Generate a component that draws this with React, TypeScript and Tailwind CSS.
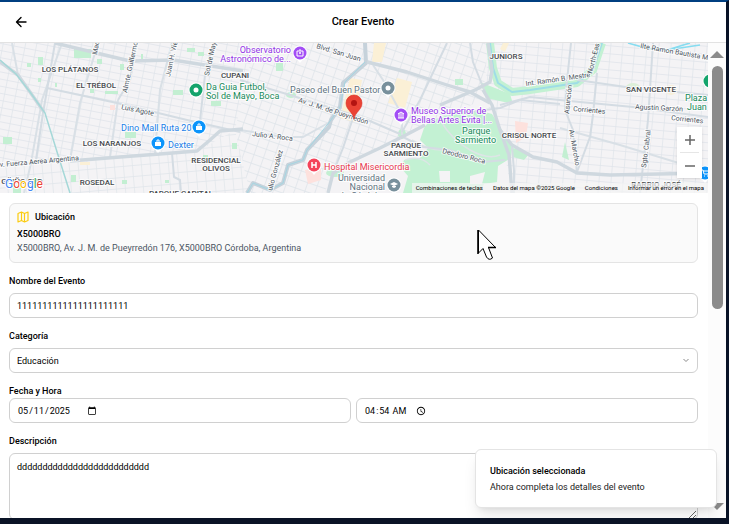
import { useState } from "react";
import type { ReactNode } from "react";

type Point = [number, number];

const line = (points: Point[]) => points.map((p) => p.join(",")).join(" ");

const minorRoads: Point[][] = [
  [[62, 43], [42, 100], [31, 163], [24, 193]],
  [[98, 43], [80, 103], [70, 160]],
  [[118, 100], [110, 157]],
  [[172, 43], [160, 90], [155, 153]],
  [[240, 130], [283, 137], [303, 137], [330, 122]],
  [[560, 128], [620, 145], [708, 172]],
  [[18, 75], [12, 43]],
  [[373, 65], [383, 80], [402, 115], [402, 135]],
];

const midRoads: Point[][] = [
  [[136, 43], [130, 80], [118, 100]],
  [[213, 43], [205, 75], [200, 121]],
  [[47, 88], [117, 103], [187, 120], [240, 132]],
  [[172, 153], [174, 177], [180, 180], [181, 193]],
  [[55, 43], [47, 90], [43, 113], [36, 160]],
  [[240, 80], [290, 95], [363, 118], [400, 134]],
  [[353, 118], [343, 148], [333, 173]],
  [[447, 43], [420, 100], [402, 132]],
  [[403, 137], [423, 147], [450, 150], [483, 162], [505, 160]],
  [[470, 43], [473, 62], [485, 92]],
  [[565, 110], [573, 130], [577, 172]],
  [[597, 73], [593, 115], [590, 137], [577, 172]],
  [[653, 43], [648, 120], [642, 175], [640, 193]],
  [[577, 80], [633, 88], [708, 95]],
  [[500, 105], [530, 97], [580, 102], [633, 107], [708, 117]],
  [[470, 112], [500, 108], [520, 100], [560, 104]],
  [[571, 43], [566, 90], [565, 112]],
  [[512, 147], [514, 170], [514, 193]],
];

const mainRoads: Point[][] = [
  [[55, 43], [130, 61], [173, 60], [243, 71]],
  [[0, 62], [18, 75], [30, 92], [44, 112]],
  [[70, 161], [120, 157], [160, 154], [197, 151], [210, 140], [220, 131], [243, 129]],
  [[367, 62], [407, 72], [447, 85], [470, 92], [490, 103]],
  [[400, 138], [380, 148], [350, 162], [333, 173], [328, 193]],
  [[400, 138], [425, 125]],
  [[483, 90], [492, 105], [500, 130], [512, 145], [533, 157], [557, 162], [577, 173], [610, 175], [708, 173]],
  [[500, 130], [509, 155], [512, 193]],
  [[440, 105], [475, 90], [490, 82], [492, 70], [488, 43]],
];

const greenPatches = [
  [74, 49, 17, 9], [38, 57, 5, 8], [97, 59, 5, 5], [120, 64, 4, 6], [27, 63, 4, 4],
  [38, 78, 3, 4], [105, 91, 13, 3], [90, 88, 4, 5], [173, 90, 10, 5], [187, 48, 8, 4],
  [198, 52, 6, 4], [211, 101, 10, 5], [125, 132, 11, 6], [3, 137, 9, 7], [232, 143, 5, 6],
  [203, 155, 5, 5], [71, 175, 5, 7], [13, 186, 8, 7], [122, 180, 5, 4], [276, 63, 7, 8],
  [55, 83, 2, 4], [165, 180, 4, 3], [141, 54, 2, 6], [455, 79, 8, 6],
];

const districts: [string, number, number, number][] = [
  ["LOS PLÁTANOS", 70, 72, 8], ["EL TRÉBOL", 96, 88, 8], ["CUPANI", 235, 78, 8],
  ["LOS NARANJOS", 112, 146, 8], ["RESIDENCIAL", 216, 163, 8], ["OLIVOS", 216, 171, 8],
  ["ROSEDAL", 97, 185, 8], ["GÜIÑO SUD", 22, 184, 8], ["PARQUE CAPITAL", 181, 196, 8],
  ["JUNIORS", 506, 59, 8], ["SAN VICENTE", 651, 92, 8], ["CRISOL NORTE", 529, 138, 8],
  ["PARQUE", 406, 148, 8], ["SARMIENTO", 406, 156, 8], ["BARRIO JOSÉ", 656, 187, 8],
];

const streets: [string, number, number, number][] = [
  ["Mac", 97, 55, -80], ["Almte. Guillermo", 127, 93, -78], ["Juan H. Vie", 170, 77, -78],
  ["Sol de May", 209, 76, -78], ["Luis Agote", 121, 109, 12], ["v. Fuerza Aerea Argentina", 0, 167, -5],
  ["Blvd. San Juan", 316, 48, 17], ["Av. J. M. de Pueyrredón", 298, 102, 18],
  ["Julio A. Roca", 252, 136, 7], ["ulio González", 272, 191, -75], ["Deodoro Roca", 442, 153, 14],
  ["Int. Ramón B. Mestre", 526, 86, -8], ["North-Eas", 592, 74, -76], ["Asunción", 569, 114, -84],
  ["Corrientes", 573, 111, 5], ["Agustín Garzón", 635, 109, 3], ["Corrientes", 671, 120, 6],
  ["Av. Marchio", 569, 130, 80], ["Sgto. Cabral", 646, 168, -83], ["Ilte Ramon Bautista M", 640, 48, 10],
];

function Poi({ x, y, color, children }: { x: number; y: number; color: string; children: ReactNode }) {
  return (
    <g transform={`translate(${x} ${y})`}>
      <path d="M0 10 L-5 4 H5Z" fill="#fff" />
      <circle r="7.5" fill="#fff" />
      <circle r="6.5" fill={color} />
      {children}
    </g>
  );
}

function LocationMap() {
  return (
    <svg
      viewBox="0 43 708 150"
      preserveAspectRatio="xMidYMid slice"
      className="block h-full w-full bg-[#f4f3f5] font-['Roboto',sans-serif]"
      role="img"
      aria-label="Mapa"
    >
      <defs>
        <pattern id="west" width="11" height="7" patternUnits="userSpaceOnUse" patternTransform="rotate(11)">
          <path d="M0 0H11M0 0V7" stroke="#dfe4ea" strokeWidth="1.4" fill="none" />
        </pattern>
        <pattern id="southwest" width="9" height="11" patternUnits="userSpaceOnUse" patternTransform="rotate(-5)">
          <path d="M0 0H9M0 0V11" stroke="#e0e5ea" strokeWidth="1.4" fill="none" />
        </pattern>
        <pattern id="centre" width="10" height="9" patternUnits="userSpaceOnUse" patternTransform="rotate(19)">
          <path d="M0 0H10M0 0V9" stroke="#dde3e9" strokeWidth="1.4" fill="none" />
        </pattern>
        <pattern id="east" width="12" height="8" patternUnits="userSpaceOnUse" patternTransform="rotate(5)">
          <path d="M0 0H12M0 0V8" stroke="#dfe4ea" strokeWidth="1.4" fill="none" />
        </pattern>
      </defs>

      <path d="M0 43H255L235 130L200 150L60 160L0 165Z" fill="url(#west)" />
      <path d="M0 165L60 160L200 150L235 130L250 193H0Z" fill="url(#southwest)" />
      <path d="M255 43H488L483 100L425 125L400 138L330 175L325 193H250L235 130Z" fill="url(#centre)" />
      <path d="M488 43H708V193H512L500 130L485 100Z" fill="url(#east)" />

      {greenPatches.map(([x, y, w, h]) => (
        <rect key={`${x}-${y}`} x={x} y={y} width={w} height={h} fill="#c3efd2" />
      ))}
      <path d="M374 43H386L382 62H372ZM350 78L362 80L354 122L340 118ZM397 78L412 82L405 108L388 103ZM80 162H90V165H80ZM503 43H509L505 52L500 49Z" fill="#fbf0d6" />
      <path d="M515 121L528 123L526 137L516 143ZM305 170L321 167V180L308 184ZM110 105H115V110H110Z" fill="#fde1dd" />
      <ellipse cx="633" cy="87" rx="7" ry="4" fill="#dcefd9" />
      <ellipse cx="671" cy="90" rx="6" ry="5" fill="#f7efd9" />
      <ellipse cx="335" cy="173" rx="9" ry="4" fill="#c3efd2" />
      <ellipse cx="291" cy="95" rx="5" ry="3" fill="#c3efd2" />
      <ellipse cx="402" cy="134" rx="4" ry="5" fill="#c3efd2" />

      <path d="M424 128L430 120L440 118L455 112L478 110L492 114L502 130L512 147L511 158L498 166L497 182L484 184L480 193H403L408 176L401 168L404 160L420 158L428 148L420 140Z" fill="#c3f1d3" />
      <path d="M439 171H450V182H440ZM470 176L485 172L482 184H470Z" fill="#f4f3f5" />
      <path d="M480 82L510 94L513 104L486 98Z" fill="#c3f1d3" />
      <path d="M513 148L530 153L524 160L513 157ZM565 142L569 160L562 157Z" fill="#c3efd2" />
      <path d="M412 140Q428 150 442 150L482 162M430 165Q420 155 405 160M440 120Q452 140 470 150T500 155" fill="none" stroke="#dde5e6" strokeWidth="1.5" />

      <polyline points="490,43 493,68 498,83 512,92 530,90 577,83 593,70 602,43" fill="none" stroke="#c3f1d3" strokeWidth="8" strokeLinejoin="round" />
      <polyline points="490,43 493,68 498,83 512,92 530,90 577,83 593,70 602,43" fill="none" stroke="#9edde6" strokeWidth="2" strokeLinejoin="round" />

      {minorRoads.map((r) => (
        <polyline key={line(r)} points={line(r)} fill="none" stroke="#d9e0e6" strokeWidth="2" />
      ))}
      {midRoads.map((r) => (
        <polyline key={line(r)} points={line(r)} fill="none" stroke="#d4dce3" strokeWidth="2" strokeLinejoin="round" />
      ))}
      <polyline points="365,43 366,63 343,83 340,107 331,120 329,127 307,150 303,160 288,165 283,183 270,190 253,183 247,193" fill="none" stroke="#c6d2db" strokeWidth="4" strokeLinejoin="round" />
      <polyline points="365,62 345,82 340,107 331,120 307,150 303,160 288,165 283,183 270,190 253,183 247,193" fill="none" stroke="#a5d6e2" strokeWidth="1" />
      {mainRoads.map((r) => (
        <polyline key={line(r)} points={line(r)} fill="none" stroke="#cfd8df" strokeWidth="3.4" strokeLinejoin="round" />
      ))}
      <polyline points="0,60 16,74 30,92 45,113 58,155 70,193" fill="none" stroke="#a5d8d8" strokeWidth="1.5" />
      <path d="M628 43Q650 50 667 50L700 45M667 50L690 43" fill="none" stroke="#86dcf0" strokeWidth="1.6" />

      <g fill="#4b545e" stroke="#fff" strokeWidth="2" strokeOpacity="0.8" style={{ paintOrder: "stroke" }}>
        {streets.map(([name, x, y, angle]) => (
          <text key={`${name}${x}`} transform={`translate(${x} ${y}) rotate(${angle})`} fontSize="7">
            {name}
          </text>
        ))}
      </g>

      <g fill="#46494d" stroke="#fff" strokeWidth="2" strokeOpacity="0.8" fontWeight="500" textAnchor="middle" style={{ paintOrder: "stroke" }}>
        {districts.map(([name, x, y, size]) => (
          <text key={name} x={x} y={y} fontSize={size}>
            {name}
          </text>
        ))}
      </g>

      <g stroke="#fff" strokeWidth="2" strokeOpacity="0.8" fontSize="9" style={{ paintOrder: "stroke" }}>
        <g fill="#9334e6" textAnchor="end">
          <text x="291" y="53">Observatorio</text>
          <text x="291" y="62">Astronómico de...</text>
        </g>
        <g fill="#9334e6">
          <text x="411" y="114">Museo Superior de</text>
          <text x="411" y="123">Bellas Artes Evita |...</text>
        </g>
        <g fill="#188a5a">
          <text x="206" y="90">Da Guia Futbol,</text>
          <text x="206" y="99">Sol de Mayo, Boca</text>
          <text x="462" y="134">Parque</text>
          <text x="455" y="143">Sarmiento</text>
          <text x="685" y="101">Plaza</text>
          <text x="687" y="110">Juan</text>
        </g>
        <g fill="#1a7fe8">
          <text x="121" y="131">Dino Mall Ruta 20</text>
          <text x="168" y="148">Dexter</text>
        </g>
        <text x="324" y="170" fill="#e8384f">Hospital Misericordia</text>
        <g fill="#5f7380">
          <text x="290" y="93">Paseo del Buen Pastor</text>
          <text x="385" y="181" textAnchor="end">Universidad</text>
          <text x="385" y="190" textAnchor="end">Nacional</text>
          <text x="385" y="199" textAnchor="end">de Córdoba</text>
        </g>
      </g>

      <Poi x={300} y={53} color="#a24df5">
        <path d="M-3-2H3V3H-3ZM-1-3H1" fill="none" stroke="#fff" />
        <circle r="1" fill="#fff" />
      </Poi>
      <Poi x={401} y={115} color="#a24df5">
        <path d="M-3-1L0-3L3-1ZM-3 3H3M-2 0V3M0 0V3M2 0V3" fill="none" stroke="#fff" />
      </Poi>
      <Poi x={196} y={90} color="#14a46c">
        <circle r="2.5" fill="#fff" />
      </Poi>
      <Poi x={388} y={88} color="#78909c">
        <circle r="2.5" fill="#fff" />
      </Poi>
      <Poi x={199} y={127} color="#0b94fb">
        <path d="M-3-1H3V3H-3Z" fill="#fff" />
        <path d="M-1-1V-3H1V-1" fill="none" stroke="#fff" />
      </Poi>
      <Poi x={158} y={143} color="#0b94fb">
        <path d="M-3-1H3V3H-3Z" fill="#fff" />
        <path d="M-1-1V-3H1V-1" fill="none" stroke="#fff" />
      </Poi>
      <Poi x={314} y={165} color="#f4435a">
        <path d="M-2-3V3M2-3V3M-2 0H2" fill="none" stroke="#fff" strokeWidth="1.5" />
      </Poi>
      <Poi x={394} y={185} color="#78909c">
        <path d="M-4-1L0-3L4-1L0 1ZM-2 1V2L0 3L2 2V1" fill="#fff" />
      </Poi>
      <Poi x={710} y={81} color="#14a46c">
        <circle r="2" fill="#fff" />
      </Poi>
      <Poi x={705} y={173} color="#0b94fb">
        <path d="M-4-3H-2L-1 1H3L4-2H-2M-1 3H0M2 3H3" fill="none" stroke="#fff" />
      </Poi>

      <path d="M354 119C353 112 346 110 346 103A8 8 0 0 1 362 103C362 110 355 112 354 119Z" fill="#ea4335" stroke="#d93025" strokeWidth="0.6" />
      <circle cx="354" cy="103" r="3" fill="#b31412" />

      <g fontSize="12" stroke="#fff" strokeWidth="2" style={{ paintOrder: "stroke" }}>
        <text x="5" y="188">
          <tspan fill="#4285f4">G</tspan>
          <tspan fill="#ea4335">o</tspan>
          <tspan fill="#fbbc04">o</tspan>
          <tspan fill="#4285f4">g</tspan>
          <tspan fill="#34a853">l</tspan>
          <tspan fill="#ea4335">e</tspan>
        </text>
      </g>
    </svg>
  );
}

const field =
  "block w-full rounded-md border border-[#d0d0d0] bg-white px-[7px] text-[9px] text-black outline-none";

export default function App() {
  const [name, setName] = useState("1".repeat(22));
  const [category, setCategory] = useState("educacion");
  const [description, setDescription] = useState("d".repeat(26));

  return (
    <div className="relative flex h-screen flex-col overflow-hidden border-t-2 border-r-3 border-b-6 border-t-[#003f80] border-r-[#081226] border-b-[#0a1326] bg-white font-['Roboto','Noto_Sans',sans-serif] text-[9px] leading-3 text-black">
      <header className="grid h-[41px] shrink-0 grid-cols-[1fr_auto_1fr] items-center border-b border-[#e2e2e2] px-3.5">
        <button type="button" aria-label="Volver" className="w-fit">
          <svg viewBox="0 0 14 14" className="size-3.5" fill="none" stroke="currentColor" strokeWidth="1.4" strokeLinecap="round" strokeLinejoin="round">
            <path d="M12 7H3M7 2.5L2.5 7L7 11.5" />
          </svg>
        </button>
        <h1 className="text-[11px] leading-4 font-medium">Crear Evento</h1>
      </header>

      <div className="flex min-h-0 flex-1">
        <main className="min-w-0 flex-1 overflow-hidden">
          <section className="relative h-[150px] overflow-hidden">
            <LocationMap />
            <div className="absolute right-1.5 bottom-[15px] flex w-[25px] flex-col items-center bg-white text-[#666] shadow">
              <button type="button" aria-label="Acercar" className="flex h-[25px] w-full items-center justify-center">
                <svg viewBox="0 0 12 12" className="size-3" stroke="currentColor" strokeWidth="1.5">
                  <path d="M6 1V11M1 6H11" />
                </svg>
              </button>
              <span className="h-px w-[19px] bg-[#e6e6e6]" />
              <button type="button" aria-label="Alejar" className="flex h-[25px] w-full items-center justify-center">
                <svg viewBox="0 0 12 12" className="size-3" stroke="currentColor" strokeWidth="1.5">
                  <path d="M1 6H11" />
                </svg>
              </button>
            </div>
            <div className="absolute right-0 bottom-0 flex h-2.5 items-center gap-2.5 bg-[#f5f5f5]/70 px-1 font-['Roboto',sans-serif] text-[6px] leading-2 whitespace-nowrap text-black">
              <button type="button">Combinaciones de teclas</button>
              <span>Datos del mapa ©2025 Google</span>
              <a href="#condiciones">Condiciones</a>
              <a href="#informar">Informar un error en el mapa</a>
            </div>
          </section>

          <form className="pt-2.5 pr-2.5 pl-[9px]">
            <section className="h-[60px] rounded-md border border-[#e4e4e4] bg-[#fafafa] px-[7px] pt-1.5 leading-[14px]">
              <h2 className="flex items-center gap-1.5 font-medium">
                <svg viewBox="0 0 24 24" className="size-3" fill="none" stroke="#fbcc10" strokeWidth="2.4" strokeLinejoin="round">
                  <path d="M2 5L9 2L15 5L22 2V19L15 22L9 19L2 22ZM9 2V19M15 5V22" />
                </svg>
                Ubicación
              </h2>
              <p className="mt-[3px] font-medium">X5000BRO</p>
              <p className="text-[#4b5563]">X5000BRO, Av. J. M. de Pueyrredón 176, X5000BRO Córdoba, Argentina</p>
            </section>

            <label htmlFor="name" className="mt-3 block font-medium">Nombre del Evento</label>
            <input id="name" value={name} onChange={(e) => setName(e.target.value)} className={`${field} mt-1.5 h-[25px]`} />

            <label htmlFor="category" className="mt-3 block font-medium">Categoría</label>
            <div className="relative mt-1.5">
              <select id="category" value={category} onChange={(e) => setCategory(e.target.value)} className={`${field} h-[25px] appearance-none`}>
                <option value="educacion">Educación</option>
              </select>
              <svg viewBox="0 0 8 8" className="pointer-events-none absolute top-2 right-2 size-2" fill="none" stroke="#8a8a8a">
                <path d="M1.5 3L4 5.5L6.5 3" />
              </svg>
            </div>

            <label htmlFor="date" className="mt-3 block font-medium">Fecha y Hora</label>
            <div className="mt-px grid grid-cols-2 gap-[5px]">
              <input
                id="date"
                type="date"
                defaultValue="2025-05-11"
                className={`${field} h-[25px] [&::-webkit-calendar-picker-indicator]:m-0 [&::-webkit-calendar-picker-indicator]:size-2.5 [&::-webkit-calendar-picker-indicator]:p-0 [&::-webkit-datetime-edit]:flex-none`}
              />
              <input
                type="time"
                aria-label="Hora"
                defaultValue="04:54"
                className={`${field} h-[25px] [&::-webkit-calendar-picker-indicator]:m-0 [&::-webkit-calendar-picker-indicator]:ml-2 [&::-webkit-calendar-picker-indicator]:size-2.5 [&::-webkit-calendar-picker-indicator]:p-0 [&::-webkit-datetime-edit]:flex-none`}
              />
            </div>

            <label htmlFor="description" className="mt-3 block font-medium">Descripción</label>
            <textarea id="description" value={description} onChange={(e) => setDescription(e.target.value)} className={`${field} mt-1.5 h-[67px] py-[7px]`} />
          </form>
        </main>

        <div className="flex w-[18px] shrink-0 flex-col items-center justify-between bg-[#fcfcfc] py-2" aria-hidden="true">
          <svg viewBox="0 0 14 8" className="h-2 w-3.5" fill="#8b8b8b">
            <path d="M7 0L14 7H0Z" />
          </svg>
          <div className="mt-[7px] h-[243px] w-[11px] rounded-full bg-[#8b8b8b]" />
          <div className="flex-1" />
          <svg viewBox="0 0 14 8" className="h-2 w-3.5" fill="#8b8b8b">
            <path d="M7 8L14 1H0Z" />
          </svg>
        </div>
      </div>

      <div role="status" className="absolute right-[9px] bottom-2.5 flex h-[59px] w-[242px] flex-col justify-center gap-1 rounded-md border border-[#e4e4e4] bg-white px-3.5 shadow-lg">
        <p className="font-medium">Ubicación seleccionada</p>
        <p className="text-[#222]">Ahora completa los detalles del evento</p>
      </div>

      <svg viewBox="0 0 20 32" className="pointer-events-none absolute top-[227px] left-[477px] h-8 w-5" fill="#fff" stroke="#000" aria-hidden="true">
        <path d="M1.5 1V24L6 19.5L9.5 28Q12 32 15.5 29L11.5 18.5H18.5Z" />
        <path d="M1 1V25M11 18.5H19" strokeWidth="1.6" />
      </svg>
    </div>
  );
}
